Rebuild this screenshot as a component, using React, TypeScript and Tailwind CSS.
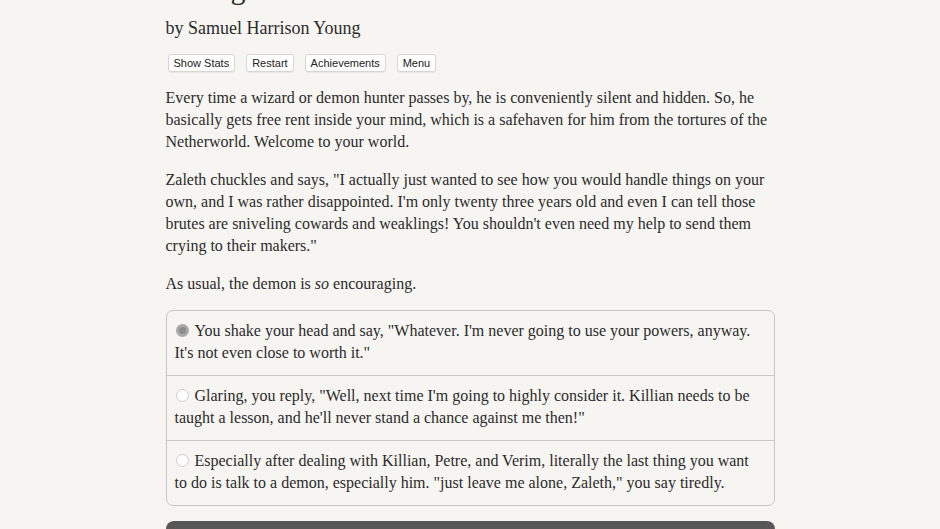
import { useState } from 'react'

const choices = [
  'You shake your head and say, "Whatever. I\'m never going to use your powers, anyway. It\'s not even close to worth it."',
  'Glaring, you reply, "Well, next time I\'m going to highly consider it. Killian needs to be taught a lesson, and he\'ll never stand a chance against me then!"',
  'Especially after dealing with Killian, Petre, and Verim, literally the last thing you want to do is talk to a demon, especially him. "just leave me alone, Zaleth," you say tiredly.',
]

export default function App() {
  const [selected, setSelected] = useState(0)

  return (
    <div className="min-h-[529px] bg-[#f7f5f2] overflow-hidden">
      <div className="mx-auto w-[609px] text-[#2b2b2b] font-['Liberation_Serif',serif] text-[16px] leading-[22px]">
        {/* header, scrolled past the title */}
        <h1 className="text-[30px] leading-[36px] -mt-[29px] font-normal">Living with a Demon</h1>
        <h2 className="text-[18px] leading-[24px] mt-[9px]">by Samuel Harrison Young</h2>

        <div className="flex gap-[11px] mt-[14px] ml-[2px] font-['Liberation_Sans',sans-serif]">
          {['Show Stats', 'Restart', 'Achievements', 'Menu'].map((label) => (
            <button
              key={label}
              className="h-[18px] px-[5px] text-[11px] leading-[16px] text-[#222] bg-white border border-[#d9d6d2] rounded-[3px] shadow-[0_1px_1px_rgba(0,0,0,0.06)]"
            >
              {label}
            </button>
          ))}
        </div>

        <div className="mt-[15px] space-y-[16px]">
          <p>
            Every time a wizard or demon hunter passes by, he is conveniently silent and hidden. So, he
            basically gets free rent inside your mind, which is a safehaven for him from the tortures of the
            Netherworld. Welcome to your world.
          </p>
          <p>
            Zaleth chuckles and says, "I actually just wanted to see how you would handle things on your
            own, and I was rather disappointed. I'm only twenty three years old and even I can tell those
            brutes are sniveling cowards and weaklings! You shouldn't even need my help to send them
            crying to their makers."
          </p>
          <p>
            As usual, the demon is <i>so</i> encouraging.
          </p>
        </div>

        <div className="mt-[15px] border border-[#c9c6c2] rounded-[7px] divide-y divide-[#c9c6c2]">
          {choices.map((text, i) => (
            <label key={i} onClick={() => setSelected(i)} className="block pl-[8px] pr-[14px] pt-[9px] pb-[11px] cursor-pointer">
              <span
                className={
                  selected === i
                    ? 'inline-block align-[-1px] w-[13px] h-[13px] rounded-full bg-[#8c8c8c] border-[3px] border-[#a8a8a8] mr-[6px] ml-[1px]'
                    : 'inline-block align-[-1px] w-[13px] h-[13px] rounded-full bg-white border border-[#cfcccc] mr-[6px] ml-[1px]'
                }
              />
              {text}
            </label>
          ))}
        </div>

        <button className="mt-[15px] w-full h-[36px] rounded-[8px] bg-[#575757] text-white">Next</button>
      </div>
    </div>
  )
}
